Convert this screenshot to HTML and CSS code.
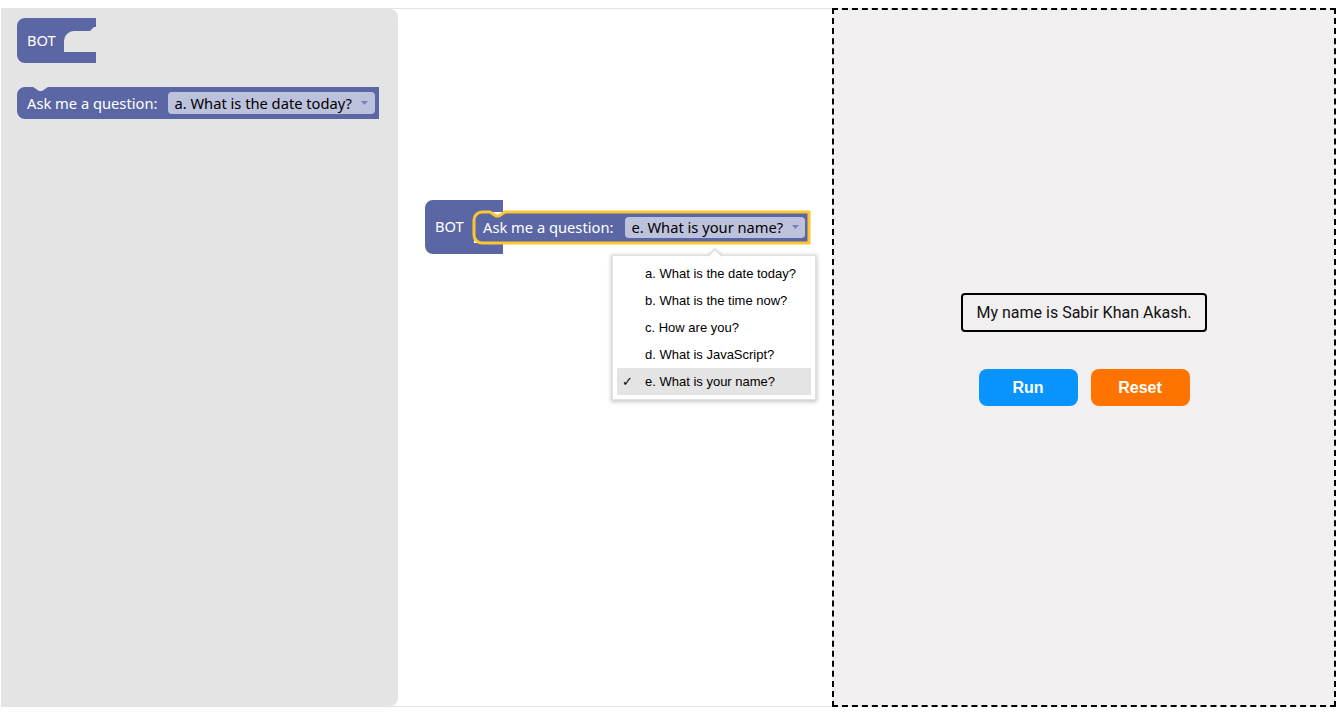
FILE: index.html
```html
<!DOCTYPE html>
<html>
<head>
<meta charset="utf-8">
<title>Bot Blocks</title>
<link rel="stylesheet" href="styles.css">
</head>
<body>
<div class="app">
  <div class="workspace">
    <div class="flyout">
      <div class="block bot-fly">
        <svg class="shape" width="79" height="45"><path class="fill" d="M0,8 A8,8 0 0 1 8,0 H79 V9 H77 L73,13 H57 A10,10 0 0 0 47,23 V34 H79 V45 H8 A8,8 0 0 1 0,37 Z"/></svg>
        <div class="bot-label">BOT</div>
      </div>
      <div class="block ask ask-fly">
        <svg class="shape" width="362" height="32"><path class="fill" d="M0,8 A8,8 0 0 1 8,0 H16 L22,4 H25 L31,0 H362 V32 H8 A8,8 0 0 1 0,24 Z"/></svg>
        <div class="ask-row">
          <span class="ask-label">Ask me a question:</span>
          <span class="dropdown">a. What is the date today?<svg class="caret" width="7" height="4"><polygon points="0,0 7,0 3.5,4"/></svg></span>
        </div>
      </div>
    </div>

    <div class="ws-stack">
      <div class="block bot-ws">
        <svg class="shape" width="78" height="54"><path class="fill" d="M0,8 A8,8 0 0 1 8,0 H78 V12 H57 A8,8 0 0 0 49,20 V43 H78 V54 H8 A8,8 0 0 1 0,46 Z"/></svg>
        <div class="bot-label">BOT</div>
      </div>
      <div class="block ask ask-ws">
        <svg class="shape" width="335" height="31"><path class="fill selected" d="M0,8 A8,8 0 0 1 8,0 H16 L22,4 H25 L31,0 H335 V31 H8 A8,8 0 0 1 0,23 Z"/></svg>
        <div class="ask-row">
          <span class="ask-label">Ask me a question:</span>
          <span class="dropdown">e. What is your name?<svg class="caret" width="7" height="4"><polygon points="0,0 7,0 3.5,4"/></svg></span>
        </div>
      </div>
    </div>

    <div class="menu">
      <div class="menu-arrow"></div>
      <div class="menu-item"><span class="check"></span>a. What is the date today?</div>
      <div class="menu-item"><span class="check"></span>b. What is the time now?</div>
      <div class="menu-item"><span class="check"></span>c. How are you?</div>
      <div class="menu-item"><span class="check"></span>d. What is JavaScript?</div>
      <div class="menu-item active"><span class="check">✓</span>e. What is your name?</div>
    </div>
  </div>

  <div class="output">
    <div class="answer">My name is Sabir Khan Akash.</div>
    <div class="buttons">
      <button class="btn run">Run</button>
      <button class="btn reset">Reset</button>
    </div>
  </div>
</div>
</body>
</html>
```
FILE: styles.css
```css
html, body {
  margin: 0;
  background: #fff;
}
body {
  font-family: "Noto Sans", sans-serif;
}
.app {
  display: flex;
  padding: 8px 6px 8px 1px;
  height: 715px;
  box-sizing: border-box;
}
.workspace {
  position: relative;
  width: 831px;
  height: 699px;
  box-sizing: border-box;
  border: 1px solid #e3e3e3;
  border-right: none;
  background: #fff;
}
.flyout {
  width: 396px;
  height: 100%;
  box-sizing: border-box;
  background: #e4e4e4;
  border-radius: 0 8px 8px 0;
  padding: 9px 0 0 15px;
  display: flex;
  flex-direction: column;
  align-items: flex-start;
  gap: 24px;
}
.block {
  position: relative;
}
.shape {
  position: absolute;
  left: 0;
  top: 0;
  overflow: visible;
}
.fill {
  fill: #5b67a5;
}
.fill.selected {
  stroke: #fcc631;
  stroke-width: 3px;
}
.bot-fly {
  width: 79px;
  height: 45px;
}
.bot-ws {
  width: 78px;
  height: 54px;
}
.bot-label {
  position: relative;
  height: 100%;
  box-sizing: border-box;
  display: flex;
  align-items: center;
  padding-left: 10px;
  padding-bottom: 2px;
  color: #fff;
  font-size: 14.7px;
}
.bot-ws .bot-label {
  padding-bottom: 3px;
}
.ask-fly {
  width: 362px;
  height: 32px;
}
.ask-ws {
  position: absolute;
  left: 49px;
  top: 12px;
  width: 335px;
  height: 31px;
}
.ask-row {
  position: relative;
  height: 100%;
  display: flex;
  align-items: center;
  padding-left: 10px;
  padding-top: 0;
  box-sizing: border-box;
  gap: 11px;
}
.ask-ws .ask-row {
  padding-left: 9px;
  gap: 12px;
  padding-top: 0;
  padding-bottom: 1px;
}
.ask-label {
  color: #fff;
  font-size: 14.7px;
  white-space: nowrap;
}
.dropdown {
  display: flex;
  align-items: center;
  height: 22px;
  padding: 0 7px 0 6px;
  border-radius: 4px;
  background: #bdc2dc;
  color: #000;
  font-size: 14.7px;
  white-space: nowrap;
}
.ask-ws .dropdown {
  height: 21px;
  padding-right: 6px;
}
.caret {
  margin-left: 9px;
  fill: #7880b6;
}
.ws-stack {
  position: absolute;
  left: 423px;
  top: 191px;
  width: 386px;
  height: 54px;
}
.menu {
  position: absolute;
  left: 610px;
  top: 246px;
  width: 204px;
  box-sizing: border-box;
  background: #fff;
  border: 1px solid rgba(0, 0, 0, 0.12);
  box-shadow: 0 1px 4px 1px rgba(0, 0, 0, 0.22);
  padding: 4px;
  font-family: "Liberation Sans", Arial, sans-serif;
  font-size: 13px;
  color: #000;
}
.menu-arrow {
  position: absolute;
  left: 97px;
  top: -5px;
  width: 9px;
  height: 9px;
  background: #fff;
  transform: rotate(45deg);
  border-top: 1px solid rgba(0, 0, 0, 0.12);
  border-left: 1px solid rgba(0, 0, 0, 0.12);
  box-shadow: -1px -1px 2px rgba(0, 0, 0, 0.12);
}
.menu-item {
  position: relative;
  display: flex;
  align-items: center;
  height: 27px;
  white-space: nowrap;
}
.menu-item.active {
  background: #e4e4e4;
}
.check {
  width: 28px;
  padding-left: 5px;
  box-sizing: border-box;
  font-family: "DejaVu Sans", sans-serif;
  font-size: 13px;
}
.output {
  width: 504px;
  height: 699px;
  box-sizing: border-box;
  border: 2px dashed #000;
  background: #f1eff0;
  display: flex;
  flex-direction: column;
  align-items: center;
  justify-content: center;
  gap: 37px;
  padding-bottom: 16px;
}
.answer {
  border: 2px solid #000;
  border-radius: 4px;
  padding: 8px 13px;
  font-family: Roboto, sans-serif;
  font-size: 16px;
  line-height: 19px;
  color: #111;
}
.buttons {
  display: flex;
  gap: 13px;
}
.btn {
  width: 99px;
  height: 37px;
  border: none;
  border-radius: 8px;
  color: #fff;
  font-family: "Liberation Sans", Arial, sans-serif;
  font-weight: bold;
  font-size: 16px;
  padding: 0;
}
.run {
  background: #0893fd;
}
.reset {
  background: #ff7400;
}
```
